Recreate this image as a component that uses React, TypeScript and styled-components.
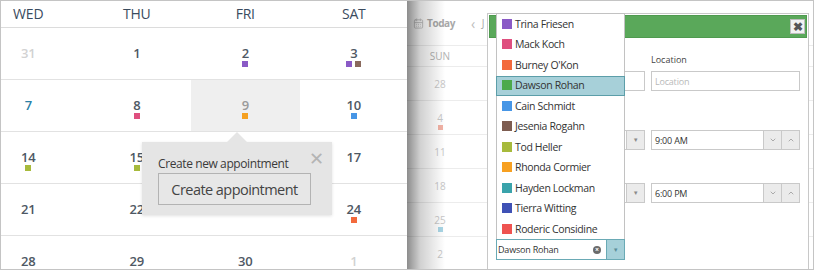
import React from "react";
import styled, { createGlobalStyle } from "styled-components";
import { CalendarDays, ChevronDown, ChevronUp } from "lucide-react";

const GlobalStyle = createGlobalStyle`
  body {
    margin: 0;
    background: #fff;
  }
`;

// Frame and the two panes
const Frame = styled.div`
  width: 814px;
  height: 270px;
  box-sizing: border-box;
  border: 1px solid #c4c4c4;
  display: flex;
  overflow: hidden;
  background: #fff;
  font-family: "Open Sans", "Noto Sans", sans-serif;
`;

const MonthPane = styled.div`
  width: 406px;
  flex: none;
  position: relative;
  overflow: hidden;
`;

const MonthGrid = styled.div`
  width: 434px;
  margin-left: -27px;
  display: grid;
  grid-template-columns: repeat(4, 1fr);
  grid-template-rows: 27px repeat(5, 52px);
`;

const DayHead = styled.div`
  box-sizing: border-box;
  border-bottom: 1px solid #dcdcdc;
  display: flex;
  align-items: center;
  justify-content: center;
  padding-bottom: 2px;
  font-size: 14px;
  color: #3a4b5e;
  letter-spacing: -0.2px;
`;

const DayCell = styled.div<{ $selected?: boolean }>`
  box-sizing: border-box;
  border-bottom: 1px solid #e2e2e2;
  background: ${(p) => (p.$selected ? "#efefef" : "#fff")};
  display: flex;
  flex-direction: column;
  align-items: center;
  padding-top: 18px;
`;

const DayNum = styled.span<{ $tone: string }>`
  font-size: 13px;
  line-height: 14px;
  font-weight: 600;
  letter-spacing: -0.3px;
  color: ${(p) => p.$tone};
`;

const Dots = styled.div`
  display: flex;
  gap: 3px;
  margin-top: 1px;
`;

const Dot = styled.span<{ $color: string }>`
  width: 6px;
  height: 6px;
  background: ${(p) => p.$color};
`;

// "Create new appointment" popup
const Popup = styled.div`
  position: absolute;
  left: 141px;
  top: 141px;
  width: 190px;
  height: 73px;
  box-sizing: border-box;
  padding: 14px 0 0 16px;
  background: #e5e5e5;
  box-shadow: 0 1px 3px rgba(0, 0, 0, 0.12);
  &::before {
    content: "";
    position: absolute;
    left: 85px;
    top: -10px;
    border-left: 10px solid transparent;
    border-right: 10px solid transparent;
    border-bottom: 10px solid #e5e5e5;
  }
`;

const PopupText = styled.div`
  font-size: 12px;
  line-height: 16px;
  color: #3a3a3a;
  letter-spacing: -0.4px;
`;

const PopupClose = styled.span`
  position: absolute;
  right: 8px;
  top: 4px;
  font-size: 18px;
  font-weight: 300;
  color: #b4b4b4;
`;

const PopupButton = styled.button`
  margin-top: 1px;
  width: 153px;
  height: 32px;
  border: 1px solid #b3b3b3;
  background: #e7e7e7;
  font-family: inherit;
  font-size: 14.5px;
  color: #444;
  letter-spacing: -0.55px;
  padding: 0;
`;

// Right pane: faded calendar behind the editor
const SidePane = styled.div`
  flex: 1;
  position: relative;
  overflow: hidden;
`;

const Toolbar = styled.div`
  height: 44px;
  border-bottom: 1px solid #ececec;
  display: flex;
  align-items: center;
  gap: 3px;
  padding-left: 6px;
  font-size: 10px;
  font-weight: 700;
  color: #a8a8a8;
  letter-spacing: -0.4px;
  box-sizing: content-box;
`;

const Chevron = styled.span`
  margin-left: 13px;
  font-weight: 400;
  font-size: 14px;
  color: #bcbcbc;
`;

const Month = styled.span`
  margin-left: 4px;
  font-weight: 400;
`;

const BgHead = styled.div`
  width: 66px;
  height: 20px;
  display: flex;
  align-items: center;
  justify-content: center;
  font-size: 10px;
  color: #b2b2b2;
`;

const BgRow = styled.div`
  height: 33px;
  border-top: 1px solid #ececec;
`;

const BgCell = styled.div`
  width: 66px;
  display: flex;
  flex-direction: column;
  align-items: center;
  padding-top: 11px;
  font-size: 10px;
  line-height: 12px;
  color: #c8c8c8;
`;

const BgDot = styled.span<{ $color: string }>`
  margin-top: 1px;
  width: 5px;
  height: 5px;
  background: ${(p) => p.$color};
`;

const Shade = styled.div`
  position: absolute;
  left: 0;
  top: 0;
  bottom: 0;
  width: 38px;
  background: linear-gradient(
    to right,
    rgba(0, 0, 0, 0.45),
    rgba(0, 0, 0, 0.18) 35%,
    rgba(0, 0, 0, 0)
  );
`;

// Editor dialog
const Dialog = styled.div`
  position: absolute;
  left: 80px;
  top: 12px;
  width: 322px;
  bottom: -10px;
  box-sizing: border-box;
  border: 1px solid #c8c8c8;
  padding: 1px;
  background: #fff;
`;

const TitleBar = styled.div`
  height: 23px;
  box-sizing: border-box;
  background: #5aa85a;
  border: 1px solid #4f9a4f;
  display: flex;
  justify-content: flex-end;
  align-items: center;
  padding-right: 1px;
`;

const CloseBox = styled.span`
  width: 15px;
  height: 15px;
  box-sizing: border-box;
  background: #f2f2f2;
  border: 1px solid #bdbdbd;
  display: flex;
  align-items: center;
  justify-content: center;
  font-size: 12px;
  font-weight: 800;
  line-height: 1;
  color: #555;
`;

const Form = styled.div`
  display: grid;
  grid-template-columns: 146px 149px;
  column-gap: 6px;
  padding: 15px 8px 0 10px;
`;

const Field = styled.div<{ $top: number }>`
  margin-top: ${(p) => p.$top}px;
  display: flex;
  flex-direction: column;
`;

const Label = styled.div`
  height: 14px;
  margin-bottom: 4px;
  font-size: 9px;
  line-height: 14px;
  color: #444;
`;

const Input = styled.div<{ $placeholder?: boolean }>`
  height: 20px;
  box-sizing: border-box;
  border: 1px solid #c9c9c9;
  display: flex;
  align-items: center;
  padding-left: 3px;
  font-size: 9px;
  color: ${(p) => (p.$placeholder ? "#b9b9b9" : "#333")};
  letter-spacing: -0.2px;
`;

const InputText = styled.span`
  flex: 1;
`;

const SideButton = styled.span`
  width: 17px;
  align-self: stretch;
  border-left: 1px solid #c9c9c9;
  background: #ebebeb;
  display: flex;
  align-items: center;
  justify-content: center;
  color: #8a8a8a;
  font-size: 6px;
`;

// Attendee dropdown
const Picker = styled.div`
  position: absolute;
  left: 89px;
  top: 12px;
  width: 129px;
`;

const List = styled.div`
  height: 226px;
  box-sizing: border-box;
  border: 1px solid #c2c2c2;
  border-bottom: none;
  background: #fff;
`;

const Option = styled.div<{ $active?: boolean }>`
  height: 20.5px;
  box-sizing: border-box;
  display: flex;
  align-items: center;
  gap: 3px;
  padding: 0 0 1px 5px;
  font-size: 10.5px;
  color: #333;
  letter-spacing: -0.35px;
  background: ${(p) => (p.$active ? "#a7d0d9" : "transparent")};
  border: 1px solid ${(p) => (p.$active ? "#5c9ea9" : "transparent")};
  margin: 0 -1px;
`;

const Swatch = styled.span<{ $color: string }>`
  width: 10px;
  height: 10px;
  flex: none;
  background: ${(p) => p.$color};
`;

const Combo = styled.div`
  height: 21px;
  box-sizing: border-box;
  border: 1px solid #6aaab5;
  display: flex;
  align-items: center;
  background: #fff;
  font-size: 9px;
  color: #333;
  letter-spacing: -0.2px;
  padding-left: 1px;
`;

const ClearIcon = styled.span`
  width: 8px;
  height: 8px;
  margin-right: 5px;
  border-radius: 50%;
  background: #6b6b6b;
  color: #fff;
  font-size: 7px;
  line-height: 8px;
  text-align: center;
  font-weight: 700;
`;

const ComboButton = styled.span`
  width: 17px;
  align-self: stretch;
  border-left: 1px solid #6aaab5;
  background: #a6d0d9;
  display: flex;
  align-items: center;
  justify-content: center;
  color: #5b8e99;
  font-size: 6px;
`;

type Day = { n?: number; tone?: "other" | "today" | "sel"; dots?: string[] };

// 16 and 23 sit under the popup, so their cells stay empty
const weeks: Day[][] = [
  [{ n: 31, tone: "other" }, { n: 1 }, { n: 2, dots: ["#8a5ac6"] }, { n: 3, dots: ["#8a5ac6", "#8a6a5d"] }],
  [{ n: 7, tone: "today" }, { n: 8, dots: ["#df4f7f"] }, { n: 9, tone: "sel", dots: ["#f5a020"] }, { n: 10, dots: ["#4796e6"] }],
  [{ n: 14, dots: ["#a7ba3c"] }, { n: 15, dots: ["#a7ba3c"] }, {}, { n: 17 }],
  [{ n: 21 }, { n: 22 }, {}, { n: 24, dots: ["#f36a3c"] }],
  [{ n: 28 }, { n: 29 }, { n: 30 }, { n: 1, tone: "other" }],
];

const toneColor = (t?: Day["tone"]) =>
  t === "other" ? "#d2d2d2" : t === "today" ? "#2a7fa6" : t === "sel" ? "#9a9a9a" : "#4e5864";

const people = [
  { name: "Trina Friesen", color: "#8a5ac6" },
  { name: "Mack Koch", color: "#df4f7f" },
  { name: "Burney O'Kon", color: "#f36a3c" },
  { name: "Dawson Rohan", color: "#4caa4c" },
  { name: "Cain Schmidt", color: "#4796e6" },
  { name: "Jesenia Rogahn", color: "#7d5c50" },
  { name: "Tod Heller", color: "#a7ba3c" },
  { name: "Rhonda Cormier", color: "#f7a021" },
  { name: "Hayden Lockman", color: "#3aa3ab" },
  { name: "Tierra Witting", color: "#3f51b5" },
  { name: "Roderic Considine", color: "#ef5350" },
];

const bgDays: { n: number; dot?: string }[] = [
  { n: 28 },
  { n: 4, dot: "#f3b3a6" },
  { n: 11 },
  { n: 18 },
  { n: 25, dot: "#a9d6e6" },
  { n: 2 },
];

export default function App() {
  return (
    <>
      <GlobalStyle />
      <Frame>
        <MonthPane>
          <MonthGrid>
            {["WED", "THU", "FRI", "SAT"].map((d) => (
              <DayHead key={d}>{d}</DayHead>
            ))}
            {weeks.flat().map((d, i) => (
              <DayCell key={i} $selected={d.tone === "sel"}>
                {d.n !== undefined && <DayNum $tone={toneColor(d.tone)}>{d.n}</DayNum>}
                {d.dots && (
                  <Dots>
                    {d.dots.map((c, j) => (
                      <Dot key={j} $color={c} />
                    ))}
                  </Dots>
                )}
              </DayCell>
            ))}
          </MonthGrid>
          <Popup>
            <PopupText>Create new appointment</PopupText>
            <PopupClose>✕</PopupClose>
            <PopupButton>Create appointment</PopupButton>
          </Popup>
        </MonthPane>

        <SidePane>
          <Toolbar>
            <CalendarDays size={11} color="#c4c4c4" strokeWidth={2} />
            Today
            <Chevron>‹</Chevron>
            <Month>J</Month>
          </Toolbar>
          <BgHead>SUN</BgHead>
          {bgDays.map((d) => (
            <BgRow key={d.n}>
              <BgCell>
                {d.n}
                {d.dot && <BgDot $color={d.dot} />}
              </BgCell>
            </BgRow>
          ))}
          <Shade />

          <Dialog>
            <TitleBar>
              <CloseBox>✖</CloseBox>
            </TitleBar>
            <Form>
              <Field $top={0}>
                <Label />
                <Input />
              </Field>
              <Field $top={0}>
                <Label>Location</Label>
                <Input $placeholder>Location</Input>
              </Field>
              <Field $top={21}>
                <Label />
                <Input>
                  <InputText />
                  <SideButton>▼</SideButton>
                </Input>
              </Field>
              <Field $top={21}>
                <Label />
                <Input>
                  <InputText>9:00 AM</InputText>
                  <SideButton>
                    <ChevronDown size={8} strokeWidth={2} />
                  </SideButton>
                  <SideButton>
                    <ChevronUp size={8} strokeWidth={2} />
                  </SideButton>
                </Input>
              </Field>
              <Field $top={15}>
                <Label />
                <Input>
                  <InputText />
                  <SideButton>▼</SideButton>
                </Input>
              </Field>
              <Field $top={15}>
                <Label />
                <Input>
                  <InputText>6:00 PM</InputText>
                  <SideButton>
                    <ChevronDown size={8} strokeWidth={2} />
                  </SideButton>
                  <SideButton>
                    <ChevronUp size={8} strokeWidth={2} />
                  </SideButton>
                </Input>
              </Field>
            </Form>
          </Dialog>

          <Picker>
            <List>
              {people.map((p) => (
                <Option key={p.name} $active={p.name === "Dawson Rohan"}>
                  <Swatch $color={p.color} />
                  {p.name}
                </Option>
              ))}
            </List>
            <Combo>
              <InputText>Dawson Rohan</InputText>
              <ClearIcon>×</ClearIcon>
              <ComboButton>▼</ComboButton>
            </Combo>
          </Picker>
        </SidePane>
      </Frame>
    </>
  );
}
